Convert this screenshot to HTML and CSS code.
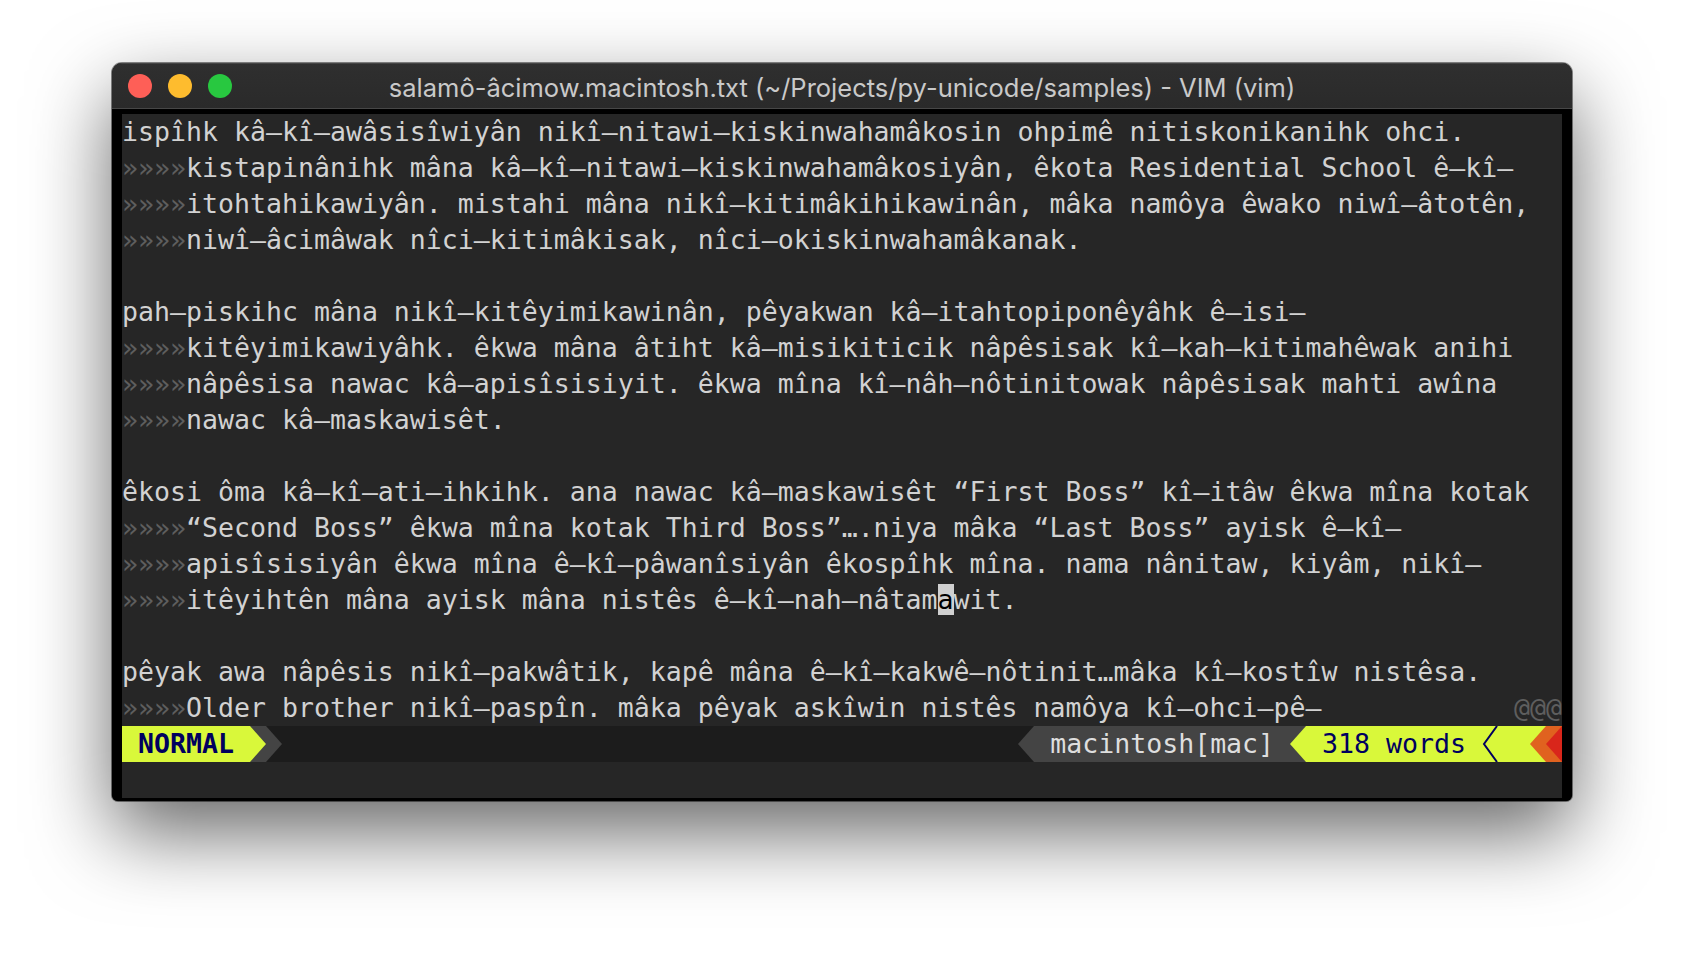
FILE: index.html
```html
<!DOCTYPE html>
<html>
<head>
<meta charset="utf-8">
<title>VIM</title>
<link rel="stylesheet" href="styles.css">
</head>
<body>
<div class="page">
  <div class="window">
    <div class="titlebar">
      <div class="lights">
        <span class="light red"></span>
        <span class="light yellow"></span>
        <span class="light green"></span>
      </div>
      <div class="title">salamô-âcimow.macintosh.txt (~/Projects/py-unicode/samples) - VIM (vim)</div>
      <div></div>
    </div>
    <div class="term">
      <div class="screen">
        <div class="row">ispîhk kâ–kî–awâsisîwiyân nikî–nitawi–kiskinwahamâkosin ohpimê nitiskonikanihk ohci.</div>
        <div class="row"><span class="sb">»»»»</span>kistapinânihk mâna kâ–kî–nitawi–kiskinwahamâkosiyân, êkota Residential School ê–kî–</div>
        <div class="row"><span class="sb">»»»»</span>itohtahikawiyân. mistahi mâna nikî–kitimâkihikawinân, mâka namôya êwako niwî–âtotên,</div>
        <div class="row"><span class="sb">»»»»</span>niwî–âcimâwak nîci–kitimâkisak, nîci–okiskinwahamâkanak.</div>
        <div class="row"></div>
        <div class="row">pah–piskihc mâna nikî–kitêyimikawinân, pêyakwan kâ–itahtopiponêyâhk ê–isi–</div>
        <div class="row"><span class="sb">»»»»</span>kitêyimikawiyâhk. êkwa mâna âtiht kâ–misikiticik nâpêsisak kî–kah–kitimahêwak anihi</div>
        <div class="row"><span class="sb">»»»»</span>nâpêsisa nawac kâ–apisîsisiyit. êkwa mîna kî–nâh–nôtinitowak nâpêsisak mahti awîna</div>
        <div class="row"><span class="sb">»»»»</span>nawac kâ–maskawisêt.</div>
        <div class="row"></div>
        <div class="row">êkosi ôma kâ–kî–ati–ihkihk. ana nawac kâ–maskawisêt “First Boss” kî–itâw êkwa mîna kotak</div>
        <div class="row"><span class="sb">»»»»</span>“Second Boss” êkwa mîna kotak Third Boss”….niya mâka “Last Boss” ayisk ê–kî–</div>
        <div class="row"><span class="sb">»»»»</span>apisîsisiyân êkwa mîna ê–kî–pâwanîsiyân êkospîhk mîna. nama nânitaw, kiyâm, nikî–</div>
        <div class="row"><span class="sb">»»»»</span>itêyihtên mâna ayisk mâna nistês ê–kî–nah–nâtam<span class="cursor">a</span>wit.</div>
        <div class="row"></div>
        <div class="row">pêyak awa nâpêsis nikî–pakwâtik, kapê mâna ê–kî–kakwê–nôtinit…mâka kî–kostîw nistêsa.</div>
        <div class="row split"><span><span class="sb">»»»»</span>Older brother nikî–paspîn. mâka pêyak askîwin nistês namôya kî–ohci–pê–</span><span class="sb">@@@</span></div>
        <div class="status">
          <span class="seg mode"> NORMAL </span>
          <svg class="sep bg-gray" viewBox="0 0 16 36"><polygon points="0,0 16,18 0,36" fill="#d9f83a"/></svg>
          <svg class="sep bg-dark" viewBox="0 0 16 36"><polygon points="0,0 16,18 0,36" fill="#444444"/></svg>
          <span class="fill"></span>
          <svg class="sep bg-dark" viewBox="0 0 16 36"><polygon points="16,0 0,18 16,36" fill="#444444"/></svg>
          <span class="seg enc"> macintosh[mac] </span>
          <svg class="sep bg-gray" viewBox="0 0 16 36"><polygon points="16,0 0,18 16,36" fill="#d9f83a"/></svg>
          <span class="seg words"> 318 words </span>
          <svg class="sep bg-yellow" viewBox="0 0 16 36"><polyline points="15,0 2,18 15,36" fill="none" stroke="#00005f" stroke-width="2"/></svg>
          <span class="seg words">  </span>
          <svg class="sep bg-yellow" viewBox="0 0 16 36"><polygon points="16,0 0,18 16,36" fill="#e0621f"/></svg>
          <svg class="sep bg-orange" viewBox="0 0 16 36"><polygon points="16,0 0,18 16,36" fill="#d9261b"/></svg>
        </div>
        <div class="row"></div>
      </div>
    </div>
  </div>
</div>
</body>
</html>
```
FILE: styles.css
```css
html, body {
  margin: 0;
  padding: 0;
  background: #ffffff;
}
.page {
  padding: 63px 0 0 112px;
  height: 962px;
  box-sizing: border-box;
  overflow: hidden;
}
.window {
  width: 1460px;
  border-radius: 10px 10px 6px 6px;
  overflow: hidden;
  background: #000;
  box-shadow: 0 32px 80px rgba(0, 0, 0, 0.6), 0 0 0 1px rgba(0, 0, 0, 0.45);
}
.titlebar {
  height: 45px;
  border-bottom: 1px solid #474747;
  background: linear-gradient(#2f2f2f, #2a2a2a);
  box-shadow: inset 0 1px 0 #444;
  display: grid;
  grid-template-columns: 1fr auto 1fr;
  align-items: center;
}
.lights {
  display: flex;
  gap: 16px;
  padding-left: 16px;
}
.light {
  width: 24px;
  height: 24px;
  border-radius: 50%;
  display: block;
}
.red { background: #fe5f57; }
.yellow { background: #febc2e; }
.green { background: #28c840; }
.title {
  font-family: "Inter", "Liberation Sans", sans-serif;
  font-size: 25.5px;
  color: #c9c9c9;
  white-space: nowrap;
  padding-top: 3px;
}
.term {
  padding: 5px 10px 3px 10px;
  background: #000;
}
.screen {
  width: 1440px;
  background: #262626;
  font-family: "DejaVu Sans Mono", monospace;
  font-size: 26.576px;
  line-height: 36px;
  color: #d2d2d2;
}
.row {
  height: 36px;
  white-space: pre;
}
.split {
  display: flex;
  justify-content: space-between;
}
.sb {
  color: #5e5e5e;
}
.cursor {
  background: #d0d0d0;
  color: #000;
}
.status {
  height: 36px;
  display: flex;
  white-space: pre;
  background: #1c1c1c;
}
.seg {
  display: block;
  height: 36px;
}
.mode {
  background: #d9f83a;
  color: #00005f;
  font-weight: bold;
}
.enc {
  background: #444444;
  color: #dedede;
}
.words {
  background: #d9f83a;
  color: #00005f;
}
.fill {
  flex: 1;
  background: #1c1c1c;
}
.sep {
  width: 16px;
  height: 36px;
  display: block;
  flex: none;
}
.bg-gray { background: #444444; }
.bg-dark { background: #1c1c1c; }
.bg-yellow { background: #d9f83a; }
.bg-orange { background: #e0621f; }
```
